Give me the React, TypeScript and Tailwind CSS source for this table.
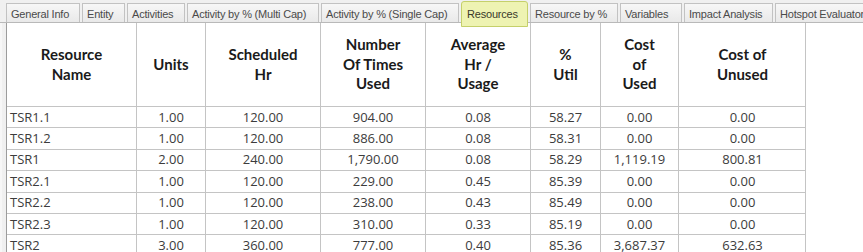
import React from "react";

const tabs = [
  { label: "General Info", w: 74 },
  { label: "Entity", w: 43 },
  { label: "Activities", w: 58 },
  { label: "Activity by % (Multi Cap)", w: 132 },
  { label: "Activity by % (Single Cap)", w: 138 },
  { label: "Resources", w: 67, active: true },
  { label: "Resource by %", w: 88 },
  { label: "Variables", w: 62 },
  { label: "Impact Analysis", w: 89 },
  { label: "Hotspot Evaluator", w: 100 },
];

const headers = [
  ["Resource", "Name"],
  ["Units"],
  ["Scheduled", "Hr"],
  ["Number", "Of Times", "Used"],
  ["Average", "Hr /", "Usage"],
  ["%", "Util"],
  ["Cost", "of", "Used"],
  ["Cost of", "Unused"],
];

const rows = [
  ["TSR1.1", "1.00", "120.00", "904.00", "0.08", "58.27", "0.00", "0.00"],
  ["TSR1.2", "1.00", "120.00", "886.00", "0.08", "58.31", "0.00", "0.00"],
  ["TSR1", "2.00", "240.00", "1,790.00", "0.08", "58.29", "1,119.19", "800.81"],
  ["TSR2.1", "1.00", "120.00", "229.00", "0.45", "85.39", "0.00", "0.00"],
  ["TSR2.2", "1.00", "120.00", "238.00", "0.43", "85.49", "0.00", "0.00"],
  ["TSR2.3", "1.00", "120.00", "310.00", "0.33", "85.19", "0.00", "0.00"],
  ["TSR2", "3.00", "360.00", "777.00", "0.40", "85.36", "3,687.37", "632.63"],
];

const cols = "grid grid-cols-[130px_69px_115px_105px_105px_70px_78px_127px]";

export default function App() {
  return (
    <div className="w-[863px] h-[252px] overflow-hidden bg-white flex flex-col">
      {/* Tab strip */}
      <div className="h-[23px] shrink-0 bg-[#f0f0f0] border-b border-[#b9b9b9] flex items-start gap-[2px] pl-[6px] font-['Liberation_Sans',sans-serif] text-[11px] tracking-[-0.2px]">
        {tabs.map((t) =>
          t.active ? (
            <div
              key={t.label}
              style={{ width: t.w }}
              className="relative z-10 mt-[1px] h-[26px] shrink-0 rounded-t-[3px] border border-[#c5d06a] bg-[#eef3b2] pl-[5px] pt-[4px] text-[#3a3a2a]"
            >
              {t.label}
            </div>
          ) : (
            <div
              key={t.label}
              style={{ width: t.w }}
              className="mt-[3px] h-[19px] shrink-0 border border-b-0 border-[#c2c2c2] bg-gradient-to-b from-[#f7f7f7] to-[#e9e9e9] pl-[4px] pt-[2px] text-[#4a4a4a]"
            >
              {t.label}
            </div>
          )
        )}
      </div>

      {/* Body */}
      <div className="flex flex-1">
        <div className="w-[7px] shrink-0 bg-[#f0f0f0] border-l-[2px] border-l-[#f7f7f7] border-r border-r-[#9c9c9c]" />
        <div className="w-[799px] border-r border-[#c4c4c4]">
          <div className={`${cols} h-[84px] border-b border-[#c4c4c4] font-['Lato',sans-serif] font-bold text-[15px] leading-[19.5px] text-[#1a1a1a]`}>
            {headers.map((h, i) => (
              <div
                key={i}
                className="flex flex-col items-center justify-center text-center border-r border-[#c4c4c4] last:border-r-0"
              >
                {h.map((l) => (
                  <span key={l}>{l}</span>
                ))}
              </div>
            ))}
          </div>
          {rows.map((r, ri) => (
            <div
              key={ri}
              className={`${cols} h-[21.4px] border-b border-[#c4c4c4] font-['Open_Sans',sans-serif] text-[13px] text-[#3c3c3c]`}
            >
              {r.map((c, ci) => (
                <div
                  key={ci}
                  className={`flex items-center border-r border-[#c4c4c4] last:border-r-0 leading-none ${
                    ci === 0 ? "pl-[3px]" : "justify-center"
                  }`}
                >
                  {c}
                </div>
              ))}
            </div>
          ))}
        </div>
      </div>
    </div>
  );
}
